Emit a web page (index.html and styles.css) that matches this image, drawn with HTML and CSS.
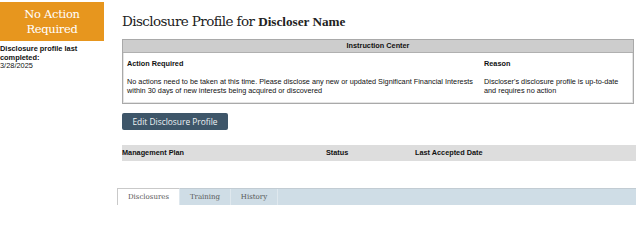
FILE: index.html
```html
<!DOCTYPE html>
<html>
<head>
<meta charset="utf-8">
<link rel="stylesheet" href="styles.css">
</head>
<body>
<div class="page">
  <aside class="sidebar">
    <div class="status">No Action<br>Required</div>
    <div class="last">
      <div class="last-label">Disclosure profile last completed:</div>
      <div class="last-date">3/28/2025</div>
    </div>
  </aside>
  <main class="main">
    <h1 class="title"><span class="title-a">Disclosure Profile for</span> <span class="title-b">Discloser Name</span></h1>
    <section class="ic">
      <div class="ic-head">Instruction Center</div>
      <div class="ic-body">
        <div class="ic-col ic-col-a">
          <div class="ic-label">Action Required</div>
          <div class="ic-text">No actions need to be taken at this time. Please disclose any new or updated Significant Financial Interests within 30 days of new interests being acquired or discovered</div>
        </div>
        <div class="ic-col ic-col-b">
          <div class="ic-label">Reason</div>
          <div class="ic-text">Discloser's disclosure profile is up-to-date and requires no action</div>
        </div>
      </div>
    </section>
    <div class="actions"><button class="btn">Edit Disclosure Profile</button></div>
    <div class="mp">
      <div class="mp-c mp-1">Management Plan</div>
      <div class="mp-c mp-2">Status</div>
      <div class="mp-c mp-3">Last Accepted Date</div>
    </div>
    <nav class="tabs">
      <div class="tab active">Disclosures</div>
      <div class="tab">Training</div>
      <div class="tab">History</div>
    </nav>
  </main>
</div>
</body>
</html>
```
FILE: styles.css
```css
html, body {
  margin: 0;
  padding: 0;
  background: #ffffff;
}
.page {
  display: flex;
  width: 636px;
  height: 206px;
  overflow: hidden;
  font-family: "Liberation Sans", Arial, sans-serif;
  color: #111;
}
.sidebar {
  width: 104px;
  flex: none;
  padding-top: 2px;
}
.status {
  background: #e7961e;
  color: #fff;
  height: 39px;
  box-sizing: border-box;
  padding-top: 5px;
  font-family: "DejaVu Serif", serif;
  font-size: 11.5px;
  letter-spacing: -0.3px;
  line-height: 15px;
  text-align: center;
}
.last {
  padding-top: 4px;
  font-size: 7.4px;
  line-height: 8.6px;
}
.last-label {
  font-weight: bold;
}
.main {
  flex: 1;
  margin-left: 18px;
  display: flex;
  flex-direction: column;
  min-width: 0;
}
.title {
  margin: 11px 0 0 0;
  font-size: 13.5px;
  line-height: 20px;
  font-weight: normal;
  color: #222;
  white-space: nowrap;
}
.title-a {
  font-family: "DejaVu Serif", serif;
  letter-spacing: -0.6px;
}
.title-b {
  font-family: "Liberation Serif", serif;
  font-weight: bold;
  font-size: 13.2px;
}
.ic {
  margin-top: 7px;
  margin-right: 2px;
  border: 1px solid #a9a9a9;
  box-shadow: inset 0 0 0 1px #e4e4e4;
}
.ic-head {
  height: 12px;
  background: #cdcdcd;
  border-bottom: 1px solid #b0b0b0;
  font-size: 7.3px;
  font-weight: bold;
  line-height: 12px;
  text-align: center;
}
.ic-body {
  display: grid;
  grid-template-columns: 357px 1fr;
  padding: 6px 0 8px 0;
}
.ic-col {
  padding-left: 4px;
  padding-right: 4px;
}
.ic-label {
  font-weight: bold;
  font-size: 7.3px;
  line-height: 9px;
}
.ic-text {
  margin-top: 9px;
  font-size: 7.3px;
  line-height: 9px;
}
.actions {
  margin-top: 9px;
}
.btn {
  display: block;
  width: 106px;
  height: 17px;
  padding: 0;
  border: 0;
  border-radius: 2px;
  background: #3e5669;
  color: #eef2f5;
  font-family: "Open Sans", sans-serif;
  font-size: 8.4px;
  line-height: 17px;
  text-align: center;
}
.mp {
  margin-top: 15px;
  height: 16px;
  background: #dddddd;
  display: grid;
  grid-template-columns: 204px 89px 1fr;
  font-size: 7.3px;
  font-weight: bold;
  line-height: 16px;
}
.tabs {
  margin-top: 27px;
  margin-left: -5px;
  height: 16px;
  background: #cfdde6;
  border-top: 1px solid #c2ccd3;
  display: flex;
}
.tab {
  height: 16px;
  font-family: "DejaVu Serif", serif;
  font-size: 7px;
  line-height: 16px;
  color: #555;
  text-align: center;
  border-right: 1px solid #dfe8ee;
}
.tab:nth-child(1) { width: 61px; }
.tab:nth-child(2) { width: 50px; }
.tab:nth-child(3) { width: 46px; }
.tab.active {
  background: #ffffff;
  border-left: 1px solid #c9c9c9;
  margin-top: -1px;
  border-top: 1px solid #c9c9c9;
}
```
